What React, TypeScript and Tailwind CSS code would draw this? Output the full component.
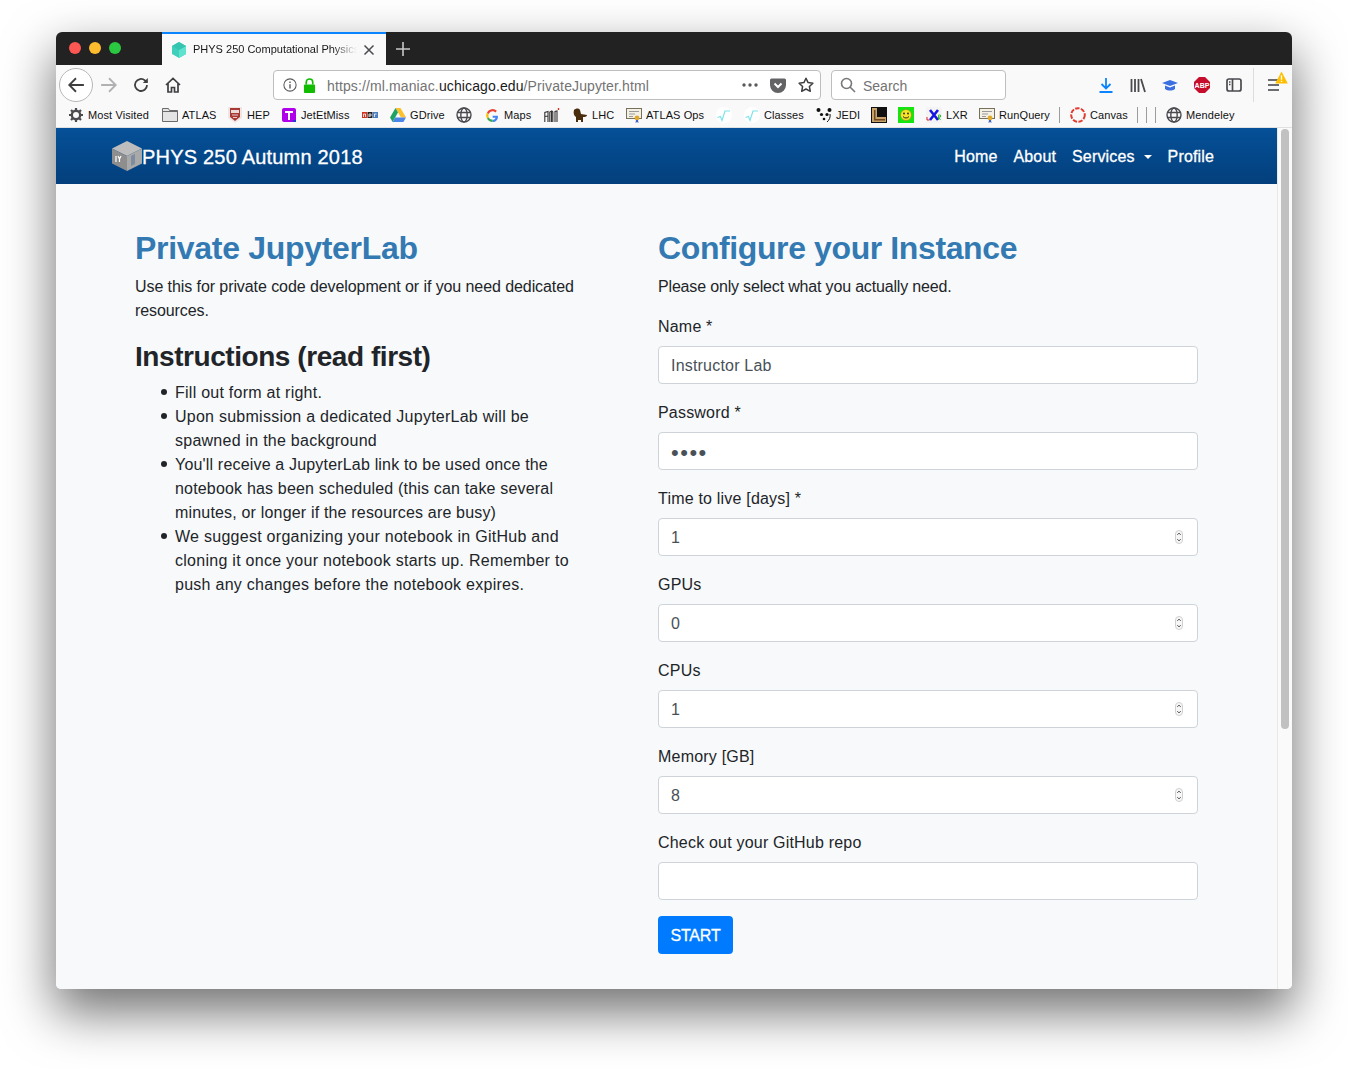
import type { ReactNode } from "react";

function Gear() {
  return (
    <svg viewBox="0 0 16 16" className="h-4 w-4">
      <circle cx="8" cy="8" r="4.2" fill="none" stroke="#4a4a4f" strokeWidth="2.4" />
      <path d="M8 1v3M8 12v3M1 8h3M12 8h3M3 3l2 2M11 11l2 2M13 3l-2 2M5 11l-2 2" stroke="#4a4a4f" strokeWidth="2.2" />
    </svg>
  );
}

function Folder() {
  return (
    <svg viewBox="0 0 16 16" className="h-4 w-4">
      <path d="M.5 14.500V1.500h6l1 2h8v11z" fill="#e4e4e4" stroke="#6b6b6b" />
      <path d="M.5 4.500h15" stroke="#6b6b6b" />
    </svg>
  );
}

function Globe() {
  return (
    <svg viewBox="0 0 16 16" className="h-4 w-4" fill="none" stroke="#4a4a4f" strokeWidth="1.4">
      <circle cx="8" cy="8" r="7" />
      <ellipse cx="8" cy="8" rx="3.2" ry="7" />
      <path d="M1.500 5.500h13M1.500 10.500h13" />
    </svg>
  );
}

function Cert() {
  return (
    <svg viewBox="0 0 16 16" className="h-4 w-4">
      <rect x=".5" y="1.500" width="15" height="10" fill="#f4f1e4" stroke="#77705a" />
      <path d="M3 4.500h10M3 7h6M3 9.500h4" stroke="#9a9a9a" />
      <circle cx="11" cy="11" r="2.400" fill="#e0a92c" />
      <path d="M10 13l-.5 3 1.500-1 1.500 1-.5-3z" fill="#3d62c4" />
    </svg>
  );
}

function Sqrt() {
  return (
    <svg viewBox="0 0 16 16" className="h-4 w-4">
      <circle cx="8" cy="8" r="8" fill="#ffffff" />
      <path d="M1.500 10.500l3-1 1.500 4 3-9.500h5" fill="none" stroke="#7fe3ea" strokeWidth="1.200" />
    </svg>
  );
}

function Hep() {
  return (
    <svg viewBox="0 0 16 16" className="h-4 w-4">
      <path d="M1 0h14v11l-7 5-7-5z" fill="#efe6e4" />
      <path d="M3 1h10v9l-5 4-5-4z" fill="#a83a36" />
      <rect x="4" y="3" width="8" height="3" fill="#e9dcda" />
      <path d="M5 8h6M6 10.500h4" stroke="#e4c9c6" strokeWidth="1" />
    </svg>
  );
}

function Jet() {
  return (
    <svg viewBox="0 0 16 16" className="h-4 w-4">
      <rect x="1" y="1" width="14" height="14" rx="2" fill="#b000ea" />
      <path d="M4 4h8v2H9v7H7V6H4z" fill="#ffffff" />
      <path d="M12 13h3v2h-3z" fill="#1d3fd0" />
    </svg>
  );
}

function Npr() {
  return (
    <svg viewBox="0 0 16 16" className="h-4 w-4">
      <rect x="0" y="5" width="5" height="6" fill="#d6311d" />
      <rect x="5.500" y="5" width="5" height="6" fill="#222222" />
      <rect x="11" y="5" width="5" height="6" fill="#4a7fc4" />
      <path d="M1.500 10V7h2v3M7 10V7h2v2H7M12.500 10V7h2" fill="none" stroke="#ffffff" strokeWidth=".8" />
    </svg>
  );
}

function Drive() {
  return (
    <svg viewBox="0 0 16 16" className="h-4 w-4">
      <path d="M5.500 1h5L16 10.500h-5z" fill="#fbc02d" />
      <path d="M5.500 1L0 10.500 2.600 15l5.400-9.500z" fill="#1ea362" />
      <path d="M2.600 15h10.800L16 10.500H5.200z" fill="#4a86e8" />
    </svg>
  );
}

function GoogleG() {
  return (
    <svg viewBox="0 0 16 16" className="mx-[1.5px] h-[13px] w-[13px]">
      <path d="M14.500 8.200H8.200v2.600h3.600c-.4 1.600-1.800 2.500-3.600 2.500V16c3.700 0 6.500-2.800 6.500-6.600z" fill="#4285f4" />
      <path d="M3.300 10A5 5 0 0 0 8.200 13.300V16a7.800 7.800 0 0 1-7-4.300z" fill="#34a853" />
      <path d="M3 8c0-.7.1-1.400.3-2L1.200 4.300a7.800 7.800 0 0 0 0 7.400L3.300 10C3.100 9.400 3 8.700 3 8z" fill="#fbbc05" />
      <path d="M8.200 2.900c1.300 0 2.400.5 3.200 1.300l2-2A7.800 7.800 0 0 0 1.200 4.300L3.300 6a5 5 0 0 1 4.900-3.100z" fill="#ea4335" />
    </svg>
  );
}

function Ami() {
  return (
    <svg viewBox="0 0 16 16" className="h-4 w-4" fill="none" stroke="#333333" strokeWidth="1.100">
      <path d="M.8 15V5.500L4 4.500V15M.8 9.500L4 9M5.800 15V5l2-1 1 1v10M7.500 4.500V15M11 15V4.500l2-.5V15" />
      <path d="M14.500 3V1" stroke="#d6311d" strokeWidth="1.400" />
    </svg>
  );
}

function Dog() {
  return (
    <svg viewBox="0 0 16 16" className="h-4 w-4">
      <path d="M2 3c2-2 5-2 6 0l1 4 6 1c0 2-3 2-4 2v5H9v-2H6v2H4v-5C2 9 1 6 2 3z" fill="#4a2d0c" />
    </svg>
  );
}

function Panda() {
  return (
    <svg viewBox="0 0 16 16" className="h-4 w-4">
      <circle cx="2.500" cy="3" r="2" fill="#111111" />
      <circle cx="13.500" cy="3" r="2" fill="#111111" />
      <circle cx="5.500" cy="7.500" r="1.600" fill="#111111" />
      <circle cx="11" cy="7.500" r="1.600" fill="#111111" />
      <circle cx="8" cy="12" r="1.300" fill="#111111" />
      <path d="M14 7c.6 3-.5 6-3 8" stroke="#111111" fill="none" />
    </svg>
  );
}

function LBox() {
  return (
    <svg viewBox="0 0 16 16" className="h-4 w-4">
      <rect width="16" height="16" fill="#111111" />
      <path d="M1 1h5v9h9v5H1z" fill="#c9a26b" />
      <path d="M3 3h1.500v9H14v1.500H3z" fill="#6d4a22" />
    </svg>
  );
}

function Smiley() {
  return (
    <svg viewBox="0 0 16 16" className="h-4 w-4">
      <rect width="16" height="16" fill="#16e60f" />
      <circle cx="8" cy="8" r="5.500" fill="#f4e52a" stroke="#8b8b20" strokeWidth=".6" />
      <circle cx="6" cy="6.500" r=".9" fill="#222222" />
      <circle cx="10" cy="6.500" r=".9" fill="#222222" />
      <path d="M5 9.500c1.500 2 4.500 2 6 0" stroke="#222222" fill="none" />
    </svg>
  );
}

function Lxr() {
  return (
    <svg viewBox="0 0 16 16" className="h-4 w-4">
      <rect width="16" height="16" fill="#f4f4f4" />
      <path d="M4 3l8 10M12 3L4 13" stroke="#1616e0" strokeWidth="2.600" />
      <path d="M1 10v3h2.500" stroke="#e02020" fill="none" />
      <path d="M12.500 8v5M12.500 8h2v2h-2l2 3" stroke="#18b018" fill="none" strokeWidth=".8" />
    </svg>
  );
}

function CanvasMark() {
  return (
    <svg viewBox="0 0 16 16" className="h-4 w-4">
      <circle cx="8" cy="8" r="6.800" fill="none" stroke="#e03b2e" strokeWidth="2" strokeDasharray="4.400 1.400" />
    </svg>
  );
}

type Bookmark = { label?: string; icon: ReactNode; width: string };

const bookmarks: Bookmark[] = [
  { label: "Most Visited", icon: <Gear />, width: "w-[94px]" },
  { label: "ATLAS", icon: <Folder />, width: "w-[65px]" },
  { label: "HEP", icon: <Hep />, width: "w-[54px]" },
  { label: "JetEtMiss", icon: <Jet />, width: "w-[81px]" },
  { icon: <Npr />, width: "w-[28px]" },
  { label: "GDrive", icon: <Drive />, width: "w-[66px]" },
  { icon: <Globe />, width: "w-[28px]" },
  { label: "Maps", icon: <GoogleG />, width: "w-[60px]" },
  { icon: <Ami />, width: "w-[28px]" },
  { label: "LHC", icon: <Dog />, width: "w-[54px]" },
  { label: "ATLAS Ops", icon: <Cert />, width: "w-[90px]" },
  { icon: <Sqrt />, width: "w-[28px]" },
  { label: "Classes", icon: <Sqrt />, width: "w-[72px]" },
  { label: "JEDI", icon: <Panda />, width: "w-[55px]" },
  { icon: <LBox />, width: "w-[27px]" },
  { icon: <Smiley />, width: "w-[28px]" },
  { label: "LXR", icon: <Lxr />, width: "w-[53px]" },
  { label: "RunQuery", icon: <Cert />, width: "w-[80px]" },
];

function BrowserTabs() {
  return (
    <div className="flex h-[33px] shrink-0 bg-[#222222]">
      <div className="flex w-[106px] items-center gap-2 pl-[13px] pb-[1px]">
        <span className="h-3 w-3 rounded-full bg-[#fc5753]" />
        <span className="h-3 w-3 rounded-full bg-[#fdbc2e]" />
        <span className="h-3 w-3 rounded-full bg-[#2ac840]" />
      </div>
      <div className="flex w-[224px] items-center border-t-2 border-[#0a84ff] bg-[#f9f9fa] pl-[9px] pr-[11px]">
        <svg viewBox="0 0 16 16" className="h-4 w-4 shrink-0">
          <path d="M8 0l7 4v8l-7 4-7-4V4z" fill="#3fd0bb" />
          <path d="M8 8l7-4v8l-7 4z" fill="#5fe3cf" />
          <path d="M1 4l7-4 7 4-7 4z" fill="#35c4b0" />
        </svg>
        <span className="ml-[6px] w-[164px] overflow-hidden whitespace-nowrap text-[11px] text-[#18181a] [mask-image:linear-gradient(to_right,black_85%,transparent)]">
          PHYS 250 Computational Physics
        </span>
        <svg viewBox="0 0 12 12" className="ml-[6px] h-3 w-3 shrink-0" stroke="#4a4a4f" strokeWidth="1.500">
          <path d="M1.500 1.500l9 9M10.500 1.500l-9 9" />
        </svg>
      </div>
      <div className="flex items-center pl-[9px]">
        <svg viewBox="0 0 16 16" className="h-4 w-4" stroke="#c8c8c8" strokeWidth="1.600">
          <path d="M8 1v14M1 8h14" />
        </svg>
      </div>
    </div>
  );
}

function Toolbar() {
  return (
    <div className="flex h-[38px] shrink-0 items-center bg-[#f9f9fa] pl-[3px] pt-[2px] text-[14px]">
      <div className="flex h-[34px] w-[34px] items-center justify-center rounded-full border border-[#b8b8b8] bg-white">
        <svg viewBox="0 0 16 16" className="h-[18px] w-[18px]" fill="none" stroke="#3f3f42" strokeWidth="1.600">
          <path d="M15 8H2M8 2L2 8l6 6" />
        </svg>
      </div>
      <svg viewBox="0 0 16 16" className="ml-[7px] h-[18px] w-[18px]" fill="none" stroke="#b1b1b3" strokeWidth="1.600">
        <path d="M1 8h13M8 2l6 6-6 6" />
      </svg>
      <svg viewBox="0 0 16 16" className="ml-[15px] h-4 w-4" fill="none" stroke="#3f3f42" strokeWidth="1.800">
        <path d="M14 8a6 6 0 1 1-2-4.500L14 5" />
        <path d="M14.800 1v5h-5z" fill="#3f3f42" stroke="none" />
      </svg>
      <svg viewBox="0 0 16 16" className="ml-4 h-4 w-4" fill="none" stroke="#3f3f42" strokeWidth="1.700">
        <path d="M1 8l7-6.500L15 8M3 6.500V15h3.500v-4.500h3V15H13V6.500" />
      </svg>
      <div className="ml-[92px] flex h-[30px] w-[548px] items-center rounded-[4px] border border-[#bebebe] bg-white pl-[9px] pr-[6px]">
        <svg viewBox="0 0 16 16" className="h-[14px] w-[14px] shrink-0" fill="none" stroke="#5a5a5e" strokeWidth="1.200">
          <circle cx="8" cy="8" r="7" />
          <path d="M8 7v5M8 4v1.600" strokeWidth="1.600" />
        </svg>
        <svg viewBox="0 0 14 16" className="ml-[6px] h-[15px] w-[13px] shrink-0">
          <rect x="1" y="7" width="12" height="9" rx="1" fill="#12bc00" />
          <path d="M3.500 7V4.500a3.500 3.500 0 0 1 7 0V7" fill="none" stroke="#12bc00" strokeWidth="1.800" />
        </svg>
        <span className="ml-[11px] whitespace-nowrap pt-[2px] tracking-[0.12px] text-[#737373]">
          https://ml.maniac.<span className="text-[#1a1a1a]">uchicago.edu</span>/PrivateJupyter.html
        </span>
        <div className="ml-auto flex items-center gap-[12px]">
          <svg viewBox="0 0 16 4" className="h-1 w-4 fill-[#5a5a5e]">
            <circle cx="2" cy="2" r="1.700" />
            <circle cx="8" cy="2" r="1.700" />
            <circle cx="14" cy="2" r="1.700" />
          </svg>
          <svg viewBox="0 0 16 16" className="h-4 w-4">
            <path d="M1.500 1.500h13A1.500 1.500 0 0 1 16 3v5a8 8 0 0 1-16 0V3a1.500 1.500 0 0 1 1.500-1.500z" fill="#636366" />
            <path d="M4.500 6.500L8 10l3.500-3.500" fill="none" stroke="#ffffff" strokeWidth="2" />
          </svg>
          <svg viewBox="0 0 16 16" className="h-4 w-4" fill="none" stroke="#3f3f42" strokeWidth="1.500">
            <path d="M8 1.200l2.100 4.400 4.800.6-3.500 3.300.9 4.800L8 12l-4.300 2.300.9-4.800L1.100 6.200l4.800-.6z" strokeLinejoin="round" />
          </svg>
        </div>
      </div>
      <div className="ml-[10px] flex h-[30px] w-[175px] items-center rounded-[4px] border border-[#bebebe] bg-white pl-[8px]">
        <svg viewBox="0 0 16 16" className="h-4 w-4" fill="none" stroke="#77777a" strokeWidth="1.600">
          <circle cx="6.500" cy="6.500" r="5" />
          <path d="M10 10l5 5" />
        </svg>
        <span className="ml-[7px] pt-[2px] text-[#737373]">Search</span>
      </div>
      <svg viewBox="0 0 16 16" className="ml-[92px] h-4 w-4" fill="none" stroke="#0a84ff" strokeWidth="1.800">
        <path d="M8 1v10M3.500 7L8 11.500 12.500 7M1.500 15h13" />
      </svg>
      <svg viewBox="0 0 16 16" className="ml-4 h-4 w-4" fill="none" stroke="#4a4a4f" strokeWidth="1.800">
        <path d="M1.500 2v13M5 2v13M8.500 2v13M11 2l4 13" />
      </svg>
      <svg viewBox="0 0 16 16" className="ml-4 h-4 w-4">
        <path d="M0 6l8-3 8 3-8 3z" fill="#3a6fe0" />
        <path d="M3 8.500v3.500c3 2 7 2 10 0V8.500l-5 2z" fill="#3a6fe0" />
      </svg>
      <svg viewBox="0 0 16 16" className="ml-4 h-4 w-4">
        <path d="M5 0h6l5 5v6l-5 5H5l-5-5V5z" fill="#c70d2c" />
        <text x="8" y="10.500" textAnchor="middle" fontSize="7" fontWeight="700" fill="#ffffff" fontFamily="Liberation Sans">ABP</text>
      </svg>
      <svg viewBox="0 0 16 16" className="ml-4 h-4 w-4" fill="none" stroke="#4a4a4f" strokeWidth="1.700">
        <rect x="1" y="2" width="14" height="12" rx="2" />
        <path d="M6.500 2v12M3 5h1.500M3 7.500h1.500" />
      </svg>
      <div className="ml-[11px] h-[34px] w-px bg-[#dcdcdc]" />
      <div className="relative ml-[12px] h-4 w-4">
        <svg viewBox="0 0 16 16" className="h-4 w-4" stroke="#3f3f42" strokeWidth="1.700">
          <path d="M2 3h11M2 8h11M2 13h11" />
        </svg>
        <svg viewBox="0 0 12 12" className="absolute -right-[6px] -top-[6px] h-[13px] w-[13px]">
          <path d="M6 .5l5.800 11H.2z" fill="#ffbf00" />
          <path d="M6 4v4M6 9v1.200" stroke="#ffffff" strokeWidth="1.200" />
        </svg>
      </div>
    </div>
  );
}

function BookmarksBar() {
  return (
    <div className="flex h-[25px] shrink-0 items-center border-b border-[#e0e0e0] bg-[#f9f9fa] pl-[12px] text-[11px] tracking-[0.1px] text-[#111111]">
      {bookmarks.map((b, i) => (
        <div key={i} className={`flex shrink-0 items-center gap-1 ${b.width}`}>
          {b.icon}
          {b.label && <span>{b.label}</span>}
        </div>
      ))}
      <div className="h-4 w-px bg-[#9c9c9c]" />
      <div className="ml-[10px] flex w-[67px] items-center gap-1">
        <CanvasMark />
        <span>Canvas</span>
      </div>
      <div className="flex items-center gap-2">
        <div className="h-4 w-px bg-[#9c9c9c]" />
        <div className="h-4 w-px bg-[#9c9c9c]" />
        <div className="h-4 w-px bg-[#9c9c9c]" />
      </div>
      <div className="ml-[10px] flex items-center gap-1">
        <Globe />
        <span>Mendeley</span>
      </div>
    </div>
  );
}

function Navbar() {
  return (
    <nav className="flex h-14 items-center bg-gradient-to-b from-[#055098] to-[#033f7c] pl-[56px] pr-[63px] text-white">
      <svg viewBox="0 0 30 30" className="h-[30px] w-[30px] shrink-0">
        <path d="M15 0l15 7.500-15 7.500L0 7.500z" fill="#bdbdbd" />
        <path d="M0 7.500l15 7.500v15L0 22.500z" fill="#8e8e8e" />
        <path d="M30 7.500L15 15v15l15-7.500z" fill="#a9a9a9" />
        <path d="M4 15v6M9 15l-1.500 3v3M6 15l1.500 3" stroke="#ffffff" strokeWidth="1.200" fill="none" />
        <path d="M19 15l4-2v10l-4 2z" fill="#7f8ca0" />
      </svg>
      <span className="pt-[2px] text-[20px] tracking-[0.2px] [-webkit-text-stroke:0.3px_white]">PHYS 250 Autumn 2018</span>
      <div className="ml-auto flex items-center gap-4 pt-[2px] text-[16px] tracking-[0.15px] [-webkit-text-stroke:0.3px_white]">
        <span>Home</span>
        <span>About</span>
        <span className="flex items-center">
          Services
          <span className="ml-[9px] h-0 w-0 border-x-[4px] border-t-[4px] border-x-transparent border-t-white" />
        </span>
        <span>Profile</span>
      </div>
    </nav>
  );
}

function Spinner() {
  return (
    <svg viewBox="0 0 8 14" className="h-[14px] w-2 shrink-0">
      <rect x=".5" y=".5" width="7" height="13" rx="3.500" fill="#f7f7f7" stroke="#d0d0d0" />
      <path d="M2.200 5L4 3l1.800 2M2.200 9L4 11l1.800-2" fill="none" stroke="#555555" strokeWidth=".9" />
    </svg>
  );
}

type FieldProps = {
  label: string;
  value?: string;
  password?: boolean;
  number?: boolean;
};

function Field({ label, value = "", password, number }: FieldProps) {
  return (
    <div className="mb-4">
      <label className="mb-[7px] block h-[25px] pt-px leading-6 tracking-[0.2px]">{label}</label>
      <div className="flex h-[38px] items-center rounded-[4px] border border-[#ced4da] bg-white pl-3 pr-[14px]">
        <input
          readOnly
          type={password ? "password" : "text"}
          value={value}
          className={`min-w-0 flex-1 bg-transparent pt-[2px] text-[#495057] outline-none ${password ? "text-[22px] tracking-[1.5px]" : "tracking-[0.2px]"}`}
        />
        {number && <Spinner />}
      </div>
    </div>
  );
}

const bullet =
  "relative before:absolute before:-left-[14px] before:top-[8px] before:h-[6px] before:w-[6px] before:rounded-full before:bg-[#212529]";

export default function App() {
  return (
    <div className="h-[1069px] w-[1348px] overflow-hidden bg-white pl-14 pt-8 font-['Liberation_Sans',Arial,sans-serif]">
      <div className="flex h-[957px] w-[1236px] flex-col overflow-hidden rounded-t-[6px] rounded-b-[5px] bg-[#f8f9fa] shadow-[0_22px_50px_2px_rgba(0,0,0,0.55)]">
        <BrowserTabs />
        <Toolbar />
        <BookmarksBar />
        <div className="flex min-h-0 flex-1">
          <div className="min-w-0 flex-1 bg-[#f8f9fa]">
            <Navbar />
            <main className="flex pl-[79px] pt-11 text-[16px] text-[#212529]">
              <section className="w-[523px] pr-[75px]">
                <h2 className="mb-[7px] pt-px text-[32px] font-bold leading-[38px] tracking-[-0.3px] text-[#337ab3]">
                  Private JupyterLab
                </h2>
                <p className="mb-4 pt-px leading-6 tracking-[-0.08px]">
                  Use this for private code development or if you need dedicated resources.
                </p>
                <h3 className="mb-[7px] pt-px text-[28px] font-bold leading-[34px] tracking-[-0.44px]">
                  Instructions (read first)
                </h3>
                <ul className="pl-10 leading-6 tracking-[0.25px]">
                  <li className={bullet}>Fill out form at right.</li>
                  <li className={bullet}>Upon submission a dedicated JupyterLab will be spawned in the background</li>
                  <li className={`${bullet} tracking-[0.18px]`}>
                    You'll receive a JupyterLab link to be used once the notebook has been scheduled (this can take
                    several minutes, or longer if the resources are busy)
                  </li>
                  <li className={`${bullet} tracking-[0.27px]`}>
                    We suggest organizing your notebook in GitHub and cloning it once your notebook starts up. Remember
                    to push any changes before the notebook expires.
                  </li>
                </ul>
              </section>
              <section className="w-[540px]">
                <h2 className="mb-[7px] pt-px text-[32px] font-bold leading-[38px] tracking-[-0.39px] text-[#337ab3]">
                  Configure your Instance
                </h2>
                <p className="mb-[15px] pt-px leading-6 tracking-[-0.17px]">
                  Please only select what you actually need.
                </p>
                <Field label="Name *" value="Instructor Lab" />
                <Field label="Password *" value="abcd" password />
                <Field label="Time to live [days] *" value="1" number />
                <Field label="GPUs" value="0" number />
                <Field label="CPUs" value="1" number />
                <Field label="Memory [GB]" value="8" number />
                <Field label="Check out your GitHub repo" />
                <button className="h-[38px] w-[75px] rounded-[4px] bg-[#007bff] pt-[2px] tracking-[-0.2px] text-white [-webkit-text-stroke:0.3px_white]">
                  START
                </button>
              </section>
            </main>
          </div>
          <div className="flex w-[15px] shrink-0 justify-center border-l border-[#e8e8e8] bg-[#fafafa] pt-px">
            <div className="h-[600px] w-2 rounded-full bg-[#c1c1c1]" />
          </div>
        </div>
      </div>
    </div>
  );
}
